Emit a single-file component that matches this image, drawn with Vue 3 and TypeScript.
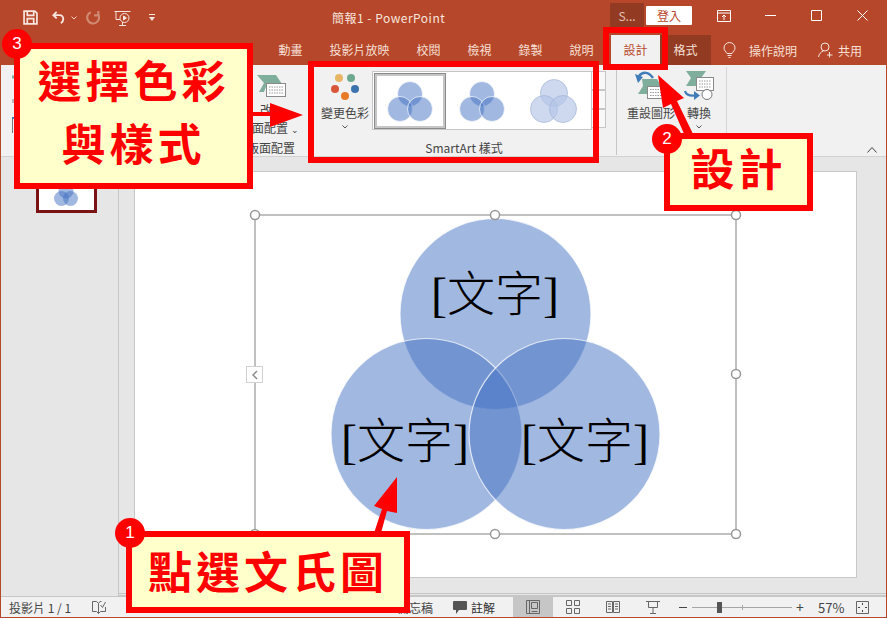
<template>
  <div class="window">
    <header class="titlebar">
      <div class="qat">
        <svg class="ico save" viewBox="0 0 14 14" fill="none" stroke="#f6e6df" stroke-width="1.600">
          <path d="M1 1h10l2 2v10H1z" />
          <path d="M4 1v4h6V1M4 13V8h6v5" />
        </svg>
        <svg class="ico undo" viewBox="0 0 16 14" fill="none" stroke="#f6e6df" stroke-width="2">
          <path d="M5 1 1.500 4.500 5 8" />
          <path d="M2 4.500h6a4 4 0 0 1 4 4c0 2-1 3.500-2.500 4.500" />
        </svg>
        <svg class="chev" viewBox="0 0 6 4" fill="none" stroke="#f0cfc3"><path d="m.5.500 2.500 2.500L5.500.500" /></svg>
        <svg class="ico redo" viewBox="0 0 14 14" fill="none" stroke="#d08a74" stroke-width="2">
          <path d="M4.500 2A5.500 5.500 0 1 0 11.500 4.500" />
          <path d="M11.500 1v4h-4" />
        </svg>
        <svg class="ico present" viewBox="0 0 17 16" fill="none" stroke="#f6e6df">
          <path d="M.5 1.500h16M2 1.500v8h4M8.500 12v3M5 15.500h7" />
          <circle cx="10.500" cy="8" r="4.500" />
          <path d="M9.500 6v4l3-2z" fill="#f6e6df" />
        </svg>
        <svg class="custom" viewBox="0 0 6 7" fill="#f6e6df"><path d="M0 0h6v1H0zM0 3h6L3 7z" /></svg>
      </div>
      <div class="doc-title">簡報1 - PowerPoint</div>
      <div class="account">S...</div>
      <button class="signin">登入</button>
      <div class="win-controls">
        <svg class="ctrl-display" viewBox="0 0 14 12" fill="none" stroke="#fff">
          <path d="M.5.500h13v11H.5zM.5 3h13" />
          <path d="M7 10V5M5 7l2-2 2 2" />
        </svg>
        <svg class="ctrl" viewBox="0 0 11 11" fill="none" stroke="#fff"><path d="M0 5.500h11" /></svg>
        <svg class="ctrl" viewBox="0 0 11 11" fill="none" stroke="#fff"><path d="M.5.500h10v10H.5z" /></svg>
        <svg class="ctrl" viewBox="0 0 11 11" fill="none" stroke="#fff"><path d="m.5.500 10 10M10.500.500l-10 10" /></svg>
      </div>
    </header>

    <nav class="tabs">
      <span v-for="tab in tabs" :key="tab" class="tab">{{ tab }}</span>
      <span class="tab design">設計</span>
      <span class="tab format">格式</span>
      <svg class="bulb" viewBox="0 0 13 17" fill="none" stroke="#f6e6df">
        <path d="M4 11.500C3 9.500 1 8.500 1 6a5.500 5.500 0 0 1 11 0c0 2.500-2 3.500-3 5.500zM4.500 13.500h4M5.500 15.500h2" />
      </svg>
      <span class="tell-me">操作說明</span>
      <svg class="person" viewBox="0 0 15 16" fill="none" stroke="#f6e6df">
        <circle cx="7" cy="5" r="4" />
        <path d="M.5 15c.5-3 2.500-5.500 5-6M11.500 10v5.500M9 13h5.500" />
      </svg>
      <span class="share">共用</span>
    </nav>

    <section class="ribbon">
      <div class="group layout-group">
        <svg class="edge-icons" viewBox="0 0 4 62" fill="none">
          <path d="M0 6h4" stroke="#7fae9c" stroke-width="3" />
          <path d="M0 30h4" stroke="#b9b9b9" stroke-width="4" />
          <path d="M.5 62V47h4" stroke="#777" />
          <path d="M0 47h4" stroke="#3f7cb8" stroke-width="2" />
        </svg>
        <svg class="layout-icon" viewBox="0 0 30 22">
          <path d="M0 0h19l6 9H10l-3 8H2l5-9z" fill="#7fae9c" />
          <rect x="9.500" y="8.500" width="19" height="13" fill="#fff" stroke="#8a8a8a" />
          <path d="M12 12h14M12 15h14M12 18h14" stroke="#9a9a9a" stroke-dasharray="1.500 1" />
        </svg>
        <div class="layout-label">改</div>
        <div class="layout-label second">版面配置 <span class="small-chev">⌄</span></div>
        <div class="group-name">版面配置</div>
      </div>

      <div class="group style-group">
        <div class="style-row">
          <div class="color-button">
            <svg class="dots" viewBox="0 0 30 26">
              <circle cx="9" cy="4" r="4" fill="#e8b565" />
              <circle cx="21" cy="4" r="4" fill="#6ea98f" />
              <circle cx="5" cy="15" r="4" fill="#d8563a" />
              <circle cx="25" cy="15" r="4" fill="#3c73ad" />
              <circle cx="15" cy="22" r="4" fill="#e87a25" />
            </svg>
            <div class="label">變更色彩</div>
            <svg class="chev dark" viewBox="0 0 6 4" fill="none" stroke="#555"><path d="m.5.500 2.500 2.500L5.500.500" /></svg>
          </div>
          <div class="gallery">
            <svg v-for="(thumb, i) in thumbs" :key="i" class="thumb" :class="{ selected: i === 0 }" viewBox="0 0 72 56">
              <circle
                v-for="(c, j) in thumb"
                :key="j"
                :cx="c[0]"
                :cy="c[1]"
                :r="i === 2 ? 13.500 : 12.500"
                :fill="i === 2 ? '#b4c5e6' : '#4472c4'"
                :fill-opacity="i === 2 ? 0.65 : 0.5"
                :stroke="i === 2 ? '#a3b4d8' : '#fff'"
                stroke-width="0.700"
              />
            </svg>
          </div>
          <div class="gallery-scroll">
            <span></span><span></span><span></span>
          </div>
        </div>
        <div class="group-name">SmartArt 樣式</div>
      </div>

      <div class="group reset-group">
        <div class="reset-row">
          <div class="reset-button">
            <svg class="reset-icon" viewBox="0 0 30 28">
              <path d="M7 8h15l4 7H14l3 5v3H3l5-8z" fill="#7fae9c" />
              <rect x="12.500" y="15.500" width="17" height="12" fill="#fff" stroke="#8a8a8a" />
              <path d="M15 18.500h12M15 21.500h12M15 24.500h12" stroke="#9a9a9a" stroke-dasharray="1.500 1" />
              <path d="M18 7C14 1 8 0 4 5" fill="none" stroke="#3f7cb8" stroke-width="2.500" />
              <path d="m0 3 8 3-5 6z" fill="#3f7cb8" />
            </svg>
            <div class="label">重設圖形</div>
          </div>
          <div class="convert-button">
            <svg class="convert-icon" viewBox="0 0 30 29">
              <path d="M2 0h20l-5 7 5 8H2l5-8z" fill="#7fae9c" />
              <rect x="12.500" y="6.500" width="17" height="13" fill="#fff" stroke="#8a8a8a" />
              <path d="M15 10h12M15 13h12M15 16h12" stroke="#9a9a9a" stroke-dasharray="1.500 1" />
              <circle cx="23" cy="23.500" r="5" fill="#fff" stroke="#777" />
              <path d="M1 20c1 4 5 5 10 4.500" fill="none" stroke="#3f7cb8" stroke-width="2.200" />
              <path d="m10 20 6 4.500-6 4.500z" fill="#3f7cb8" />
            </svg>
            <div class="label">轉換</div>
            <svg class="chev dark" viewBox="0 0 6 4" fill="none" stroke="#555"><path d="m.5.500 2.500 2.500L5.500.500" /></svg>
          </div>
        </div>
      </div>
      <svg class="collapse" viewBox="0 0 10 6" fill="none" stroke="#444"><path d="m.5 5.500 4.500-5 4.500 5" /></svg>
    </section>

    <main class="workspace">
      <aside class="sidebar">
        <div class="slide-thumb">
          <svg viewBox="0 0 55 29" class="thumb-venn">
            <circle cx="27" cy="10" r="7.500" fill="#4472c4" fill-opacity="0.5" />
            <circle cx="22.500" cy="17.500" r="7.500" fill="#4472c4" fill-opacity="0.5" />
            <circle cx="31.500" cy="17.500" r="7.500" fill="#4472c4" fill-opacity="0.5" />
          </svg>
        </div>
      </aside>
      <div class="pane">
        <div class="slide">
          <svg class="venn" viewBox="135 172 721 405">
            <rect x="255" y="215" width="481" height="319" fill="none" stroke="#979797" stroke-width="1.200" />
            <g fill="#4472c4" fill-opacity="0.5" stroke="#fff" stroke-opacity="0.75" stroke-width="1.200">
              <circle cx="495.500" cy="314" r="95.500" />
              <circle cx="426.500" cy="434" r="95.500" />
              <circle cx="564.500" cy="434" r="95.500" />
            </g>
            <text x="495" y="311" class="venn-text" text-anchor="middle">[文字]</text>
            <text x="405" y="458" class="venn-text" text-anchor="middle">[文字]</text>
            <text x="585" y="458" class="venn-text" text-anchor="middle">[文字]</text>
            <circle v-for="(h, i) in handles" :key="i" :cx="h[0]" :cy="h[1]" r="4.500" fill="#fff" stroke="#979797" stroke-width="1.500" />
          </svg>
        </div>
        <div class="expand-tab">
          <svg viewBox="0 0 6 10" fill="none" stroke="#8a8a8a" stroke-width="1.500"><path d="M5 1 1 5l4 4" /></svg>
        </div>
      </div>
    </main>

    <footer class="statusbar">
      <span class="slide-count">投影片 1 / 1</span>
      <svg class="book" viewBox="0 0 14 13" fill="none" stroke="#666">
        <path d="M6.500 2.500 4.500.5H.5v10h4l2 2v-10L8 .5h1.500M13.500 6v4.500h-5l-2 2" />
        <path d="m8.500 4 2 2.500 3-5.500" />
      </svg>
      <span class="notes">備忘稿</span>
      <svg class="comment-icon" viewBox="0 0 14 13" fill="#555"><path d="M1 0h12a1 1 0 0 1 1 1v7a1 1 0 0 1-1 1H6l-3 4V9H1a1 1 0 0 1-1-1V1a1 1 0 0 1 1-1z" /></svg>
      <span class="comments">註解</span>
      <div class="view active">
        <svg viewBox="0 0 14 14" fill="none" stroke="#666"><path d="M.5.500h13v13H.5zM3.500.500v13M5.500 2.500h6v6h-6zM5.500 11.500h6" /></svg>
      </div>
      <div class="view">
        <svg viewBox="0 0 14 14" fill="none" stroke="#666"><path d="M.5.500h5v5h-5zM8.500.500h5v5h-5zM.5 8.500h5v5h-5zM8.500 8.500h5v5h-5z" /></svg>
      </div>
      <div class="view">
        <svg viewBox="0 0 14 14" fill="none" stroke="#666"><path d="M.5 1.500h6v11h-6zM7.500 1.500h6v11h-6zM2 4h3M2 6.500h3M2 9h3M9 4h3M9 6.500h3M9 9h3" /></svg>
      </div>
      <div class="view">
        <svg viewBox="0 0 14 14" fill="none" stroke="#666"><path d="M0 1.500h14M2.500 1.500v6h9v-6M7 7.500v5.500M4 13.500h6" /></svg>
      </div>
      <span class="zoom-minus"></span>
      <div class="zoom-track"><i class="tick"></i><i class="knob"></i></div>
      <span class="zoom-plus">+</span>
      <span class="zoom-value">57%</span>
      <svg class="fit" viewBox="0 0 13 13" fill="none" stroke="#666">
        <path d="M.5.500h12v12H.5z" />
        <path d="M6.500 2v2M6.500 9v2M2 6.500h2M9 6.500h2" stroke="#444" />
      </svg>
    </footer>

    <div class="mark mark-styles"></div>
    <div class="mark mark-tab"></div>

    <svg class="arrows" viewBox="0 0 887 618">
      <path d="M250 112h20v-9l33 12-33 12v-11h-20z" />
      <path d="M658 75 684 98l-7 3 17 35h-9l-14-32-8 4z" />
      <path d="M397 477v36l-10-2-6 22h-7l8-24-8-3z" />
    </svg>

    <div class="callout callout-style"><div>選擇色彩</div><div>與樣式</div></div>
    <div class="callout callout-design">設計</div>
    <div class="callout callout-venn">點選文氏圖</div>
    <span class="badge badge-3">3</span>
    <span class="badge badge-2">2</span>
    <span class="badge badge-1">1</span>
  </div>
</template>

<script setup lang="ts">
const tabs: string[] = ['動畫', '投影片放映', '校閱', '檢視', '錄製', '說明']

const thumbs: number[][][] = [
  [[36, 21], [26, 36], [46, 36]],
  [[36, 21], [26, 36], [46, 36]],
  [[36, 20], [26, 36], [45, 36]],
]

const handles: number[][] = [
  [255, 215], [495, 215], [736, 215],
  [736, 374],
  [255, 534], [495, 534], [736, 534],
]
</script>

<style>
html,
body {
  margin: 0;
  overflow: hidden;
  background: #e6e6e6;
}
</style>

<style scoped>
.window {
  position: relative;
  width: 887px;
  height: 618px;
  box-sizing: border-box;
  border: 1px solid #b7472a;
  border-top: 0;
  display: flex;
  flex-direction: column;
  overflow: hidden;
  font-family: "Noto Sans CJK TC", "Liberation Sans", sans-serif;
  font-size: 12px;
  color: #444;
}

.titlebar {
  height: 35px;
  background: #b7472a;
  display: flex;
  align-items: center;
  flex: none;
  color: #f6e6df;
}

.qat {
  width: 331px;
  display: flex;
  align-items: center;
  padding-left: 22px;
  box-sizing: border-box;
}

.ico {
  width: 15px;
  height: 15px;
  flex: none;
}

.undo {
  margin-left: 14px;
}

.chev {
  width: 6px;
  height: 4px;
  margin-left: 4px;
  flex: none;
}

.redo {
  margin-left: 9px;
}

.present {
  width: 17px;
  height: 16px;
  margin-left: 13px;
}

.custom {
  width: 6px;
  height: 7px;
  margin-left: 18px;
}

.doc-title {
  width: 278px;
  font-size: 12px;
  letter-spacing: 0.500px;
  white-space: pre;
  box-sizing: border-box;
}

.account {
  width: 34px;
  height: 26px;
  margin-top: -4px;
  background: #923a22;
  text-align: center;
  line-height: 26px;
  color: #e6c2b5;
}

.signin {
  width: 46px;
  height: 19px;
  margin-left: 2px;
  margin-top: -4px;
  padding: 0;
  border: 0;
  border-radius: 1px;
  background: #fff;
  color: #b7472a;
  font: inherit;
  line-height: 19px;
}

.win-controls {
  display: flex;
  align-items: center;
  margin-left: 25px;
  margin-top: -4px;
}

.ctrl-display {
  width: 14px;
  height: 12px;
}

.ctrl {
  width: 11px;
  height: 11px;
  margin-left: 35px;
}

.ctrl-display + .ctrl {
  margin-left: 34px;
}

.tabs {
  height: 30px;
  background: #b7472a;
  display: flex;
  align-items: center;
  flex: none;
  padding-left: 264px;
  color: #f6e0d8;
}

.tab {
  padding: 0 13.500px;
  line-height: 30px;
}

.design {
  width: 49px;
  box-sizing: border-box;
  margin-left: 4px;
  background: #f1f1f1;
  color: #b7472a;
  text-align: center;
  padding: 0;
}

.format {
  width: 51px;
  box-sizing: border-box;
  background: #923a22;
  text-align: center;
  padding: 0;
}

.bulb {
  width: 13px;
  height: 17px;
  margin-left: 12px;
}

.tell-me {
  margin-left: 13px;
}

.person {
  width: 15px;
  height: 16px;
  margin-left: 21px;
}

.share {
  margin-left: 5px;
}

.ribbon {
  position: relative;
  height: 92px;
  box-sizing: border-box;
  background: #f1f1f1;
  border-bottom: 1px solid #d2d2d2;
  display: flex;
  flex: none;
}

.group {
  position: relative;
  box-sizing: border-box;
  height: 91px;
}

.group-name {
  position: absolute;
  left: 0;
  right: 6px;
  bottom: -2px;
  text-align: center;
  font-size: 12px;
  line-height: 20px;
  color: #444;
  white-space: nowrap;
}

.layout-group {
  width: 317px;
  padding: 10px 0 0 256px;
}

.edge-icons {
  position: absolute;
  left: 11px;
  top: 6px;
  width: 4px;
  height: 62px;
}

.layout-icon {
  width: 30px;
  height: 22px;
  display: block;
}

.layout-label {
  margin-top: 4px;
  margin-left: 3px;
  line-height: 18px;
  white-space: nowrap;
}

.layout-label.second {
  margin-top: 0;
  margin-left: -17px;
}

.small-chev {
  font-size: 9px;
}

.layout-group .group-name {
  left: 246px;
  right: 12px;
  text-align: left;
}

.style-group {
  width: 298px;
}

.style-row {
  display: flex;
  padding-top: 6px;
}

.color-button {
  width: 54px;
  display: flex;
  flex-direction: column;
  align-items: center;
}

.dots {
  width: 30px;
  height: 26px;
  margin-top: 3px;
  flex: none;
}

.label {
  margin-top: 4px;
  line-height: 18px;
  white-space: nowrap;
}

.chev.dark {
  margin: 3px 0 0;
}

.gallery {
  width: 220px;
  height: 59px;
  box-sizing: border-box;
  background: #fff;
  border: 1px solid #c6c6c6;
  display: flex;
  align-items: center;
  padding-left: 1px;
  flex: none;
}

.thumb {
  width: 72px;
  height: 56px;
  flex: none;
}

.thumb.selected {
  box-shadow: inset 0 0 0 1px #8a8a8a, inset 0 0 0 3px #c6c6c6;
}

.gallery-scroll {
  width: 14px;
  display: flex;
  flex-direction: column;
}

.gallery-scroll span {
  height: 19px;
  box-sizing: border-box;
  border: 1px solid #c6c6c6;
  border-left: 0;
  background: #f8f8f8;
}

.reset-group {
  width: 111px;
  border-left: 1px solid #c6c6c6;
  border-right: 1px solid #d6d6d6;
  height: 88px;
  margin-top: 2px;
}

.reset-row {
  display: flex;
  padding-top: 4px;
}

.reset-button {
  width: 66px;
  padding-left: 10px;
  box-sizing: border-box;
}

.reset-icon {
  width: 30px;
  height: 28px;
  display: block;
  margin-left: 8px;
}

.reset-button .label,
.convert-button .label {
  margin-top: 5px;
}

.convert-button {
  display: flex;
  flex-direction: column;
  align-items: center;
  width: 32px;
}

.convert-icon {
  width: 30px;
  height: 29px;
  flex: none;
}

.convert-button .label {
  margin-top: 4px;
}

.collapse {
  position: absolute;
  right: 9px;
  bottom: 3px;
  width: 10px;
  height: 6px;
}

.workspace {
  flex: 1;
  display: flex;
  min-height: 0;
  background: #e6e6e6;
}

.sidebar {
  width: 117px;
  flex: none;
  border-right: 1px solid #c6c6c6;
  position: relative;
}

.slide-thumb {
  width: 61px;
  height: 35px;
  box-sizing: border-box;
  margin: 21px 0 0 35px;
  border: 3px solid #7a1414;
  background: #fff;
}

.thumb-venn {
  display: block;
  width: 55px;
  height: 29px;
}

.pane {
  position: relative;
  flex: 1;
  padding: 15px 0 0 16px;
  border-bottom: 3px double #c6c6c6;
}

.slide {
  width: 721px;
  height: 405px;
  background: #fff;
  box-shadow: 0 0 0 1px #c8c8c8;
}

.venn {
  display: block;
  width: 721px;
  height: 405px;
}

.venn-text {
  font-family: "Liberation Serif", "Noto Sans CJK TC", serif;
  font-size: 48px;
  font-weight: 300;
  fill: #000;
}

.expand-tab {
  position: absolute;
  left: 127px;
  top: 209px;
  width: 17px;
  height: 17px;
  box-sizing: border-box;
  background: #fff;
  border: 1px solid #d0d0d0;
  display: flex;
  align-items: center;
  justify-content: center;
}

.expand-tab svg {
  width: 6px;
  height: 10px;
}

.statusbar {
  height: 21px;
  background: #f1f1f1;
  border-top: 1px solid #c6c6c6;
  display: flex;
  align-items: center;
  flex: none;
  box-sizing: border-box;
  color: #444;
}

.slide-count {
  margin-left: 8px;
  width: 83px;
}

.book {
  width: 14px;
  height: 13px;
}

.notes {
  margin-left: 291px;
  width: 59px;
}

.comment-icon {
  width: 14px;
  height: 13px;
  margin-left: -3px;
}

.comments {
  margin-left: 4px;
  margin-right: 18px;
  color: #333;
}

.view {
  width: 40px;
  height: 100%;
  display: flex;
  align-items: center;
  justify-content: center;
}

.view.active {
  background: #c6c6c6;
}

.view svg {
  width: 14px;
  height: 14px;
}

.zoom-minus {
  width: 8px;
  height: 1px;
  margin-left: 6px;
  background: #444;
}

.zoom-track {
  position: relative;
  width: 100px;
  height: 1px;
  margin-left: 5px;
  background: #a6a6a6;
}

.tick {
  position: absolute;
  left: 50px;
  top: -2px;
  width: 1px;
  height: 5px;
  background: #a6a6a6;
}

.knob {
  position: absolute;
  left: 25px;
  top: -5px;
  width: 5px;
  height: 11px;
  background: #555;
}

.zoom-plus {
  margin-left: 4px;
  font-size: 14px;
  width: 22px;
}

.zoom-value {
  width: 38px;
  font-size: 13px;
}

.fit {
  width: 13px;
  height: 13px;
}

.mark {
  position: absolute;
  box-sizing: border-box;
  border: 6px solid #f00;
}

.mark-styles {
  left: 307px;
  top: 61px;
  width: 291px;
  height: 102px;
}

.mark-tab {
  left: 602px;
  top: 27px;
  width: 65px;
  height: 43px;
}

.arrows {
  position: absolute;
  left: -1px;
  top: 0;
  width: 887px;
  height: 618px;
  fill: #f00;
  pointer-events: none;
}

.callout {
  position: absolute;
  box-sizing: border-box;
  border: 6px solid #f00;
  background: #ffc;
  color: #f00;
  font-weight: 700;
  font-size: 44px;
  letter-spacing: 4px;
  text-align: center;
  line-height: 1;
}

.callout-style {
  left: 13px;
  top: 43px;
  width: 239px;
  height: 146px;
  padding-top: 8px;
  display: flex;
  flex-direction: column;
  gap: 19px;
}

.callout-design {
  left: 663px;
  top: 133px;
  width: 149px;
  height: 78px;
  padding-top: 6px;
}

.callout-venn {
  left: 125px;
  top: 531px;
  width: 284px;
  height: 82px;
  padding-top: 11px;
}

.badge {
  position: absolute;
  width: 30px;
  height: 30px;
  border-radius: 50%;
  background: #f00;
  color: #fff;
  font-family: "Liberation Sans", sans-serif;
  font-size: 17px;
  line-height: 30px;
  text-align: center;
}

.badge-3 {
  left: 1px;
  top: 29px;
}

.badge-2 {
  left: 651px;
  top: 124px;
}

.badge-1 {
  left: 114px;
  top: 518px;
}
</style>
